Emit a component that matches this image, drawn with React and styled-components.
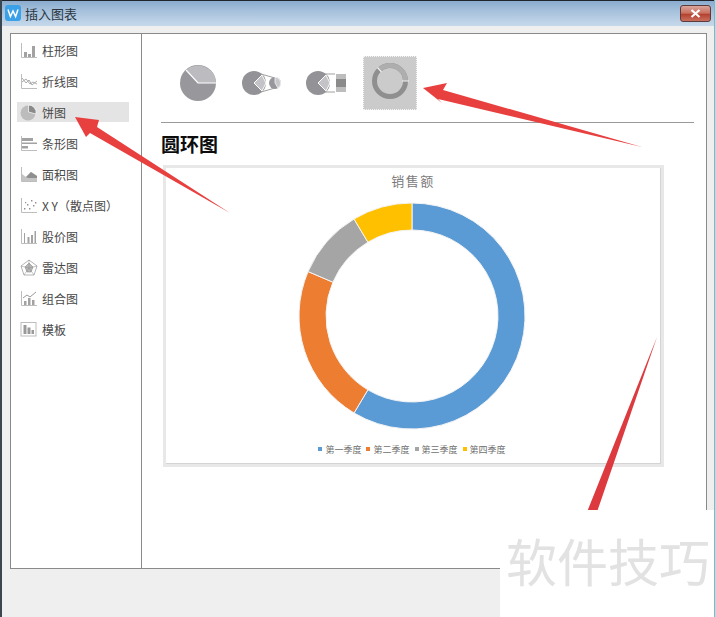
import styled, { createGlobalStyle } from 'styled-components'

const GlobalStyle = createGlobalStyle`
  html, body {
    margin: 0;
    padding: 0;
    background: #fff;
  }
  * {
    box-sizing: border-box;
  }
`

const Page = styled.div`
  position: relative;
  width: 715px;
  height: 617px;
  overflow: hidden;
  display: flex;
  flex-direction: column;
  font-family: 'Noto Sans CJK SC', 'Liberation Sans', sans-serif;
  background: #efefef;
  border-left: 2px solid #3a4650;
  border-right: 1px solid #42d3e0;
`

const TitleBar = styled.div`
  height: 26px;
  flex: none;
  display: flex;
  align-items: center;
  padding: 0 3px 1px 3px;
  gap: 4px;
  border-top: 1px solid #20262c;
  background: linear-gradient(to bottom, #8aaccf 0%, #a9c3dd 45%, #c6d9eb 100%);
`

const TitleText = styled.span`
  font-size: 13px;
  color: #2b3640;
`

const CloseButton = styled.div`
  margin-left: auto;
  width: 31px;
  height: 17px;
  display: flex;
  align-items: center;
  justify-content: center;
  border: 1px solid #5e3a3a;
  border-radius: 3px;
  background: linear-gradient(to bottom, #d9a59c 0%, #c9705f 48%, #b5412f 55%, #c9705f 100%);
`

const Body = styled.div`
  flex: 1;
  padding: 7px 7px 0 8px;
`

const Panel = styled.div`
  height: 536px;
  display: flex;
  border: 1px solid #8a8a8a;
  background: #fff;
`

const Sidebar = styled.div`
  width: 131px;
  flex: none;
  padding: 6px 12px 0 6px;
  border-right: 1px solid #8a8a8a;
`

const SideItem = styled.div`
  height: 20px;
  margin-bottom: 11px;
  display: flex;
  align-items: center;
  gap: 4px;
  padding-left: 3px;
  font-size: 12px;
  color: #484848;
  white-space: pre;
  background: ${(props) => (props.$active ? '#e4e4e4' : 'transparent')};
`

const Main = styled.div`
  flex: 1;
  padding: 0 12px 0 19px;
`

const TypeRow = styled.div`
  height: 89px;
  padding: 22px 0 0 10px;
  display: flex;
  align-items: flex-start;
  gap: 10px;
  border-bottom: 1px solid #9a9a9a;
`

const TypeButton = styled.div`
  width: 54px;
  height: 54px;
  display: flex;
  align-items: center;
  justify-content: center;
  background: ${(props) => (props.$active ? '#cbcbcb' : 'transparent')};
  border: ${(props) => (props.$active ? '1px dotted #f4f4f4' : 'none')};
`

const Heading = styled.h2`
  margin: 10px 0 10px;
  font-size: 19px;
  line-height: 22px;
  font-weight: 700;
  color: #0c0c0c;
`

const ChartBox = styled.div`
  width: 501px;
  height: 302px;
  margin-left: 2px;
  display: flex;
  flex-direction: column;
  align-items: center;
  border: 3px solid #e8e8e8;
  box-shadow: inset -1px -1px 0 #d4d4d4;
  padding: 1px 3px 0 0;
`

const ChartTitle = styled.div`
  height: 24px;
  line-height: 24px;
  padding-left: 2px;
  font-size: 13px;
  letter-spacing: 1.5px;
  color: #7a7a7a;
`

const Donut = styled.svg`
  margin-top: 3px;
  flex: none;
`

const Legend = styled.div`
  margin-top: 5px;
  height: 16px;
  display: flex;
  align-items: center;
  gap: 5px;
  font-size: 9px;
  color: #707070;
`

const LegendItem = styled.span`
  display: flex;
  align-items: center;
  gap: 3px;
`

const Swatch = styled.i`
  width: 4px;
  height: 4px;
  background: ${(props) => props.$color};
`

const Arrows = styled.svg`
  position: absolute;
  left: -2px;
  top: 0;
  pointer-events: none;
`

const Watermark = styled.div`
  position: absolute;
  right: -1px;
  bottom: 0;
  width: 215px;
  height: 107px;
  padding: 15px 0 0 6px;
  background: #fff;
  font-size: 51px;
  line-height: 70px;
  font-weight: 400;
  color: #e2e2e2;
  white-space: nowrap;
`

const gray = '#a2a2a2'
const axis = (
  <path d="M1.5 1v14.5H17" fill="none" stroke="#bdbdbd" strokeWidth="1" />
)

const sideIcons = {
  bar: (
    <>
      {axis}
      <path d="M4 10h3v5H4zM8 12h3v3H8zM12 4h3v11h-3z" fill={gray} />
    </>
  ),
  line: (
    <>
      {axis}
      <path d="M2 5l4 5 3-3 3 5 5-4M2 9l4-3 4 5 3-2 4 2" fill="none" stroke={gray} strokeWidth="0.9" />
    </>
  ),
  pie: (
    <>
      <circle cx="8" cy="9" r="7.500" fill="#bcbcbc" />
      <path d="M8.500 1a7.500 7.500 0 0 1 7.500 9L8.500 8z" fill="#8a8a8a" stroke="#fff" strokeWidth="0.7" />
    </>
  ),
  hbar: (
    <>
      {axis}
      <path d="M2 3h11v3H2zM2 7.500h15V9H2zM2 11h6v2.500H2z" fill={gray} />
    </>
  ),
  area: (
    <>
      {axis}
      <path d="M2 15V8l4 3 5-5 6 4v5z" fill="#c4c4c4" />
      <path d="M6 11l5-5 6 4v2H8z" fill="#8f8f8f" />
    </>
  ),
  scatter: (
    <>
      {axis}
      <path d="M4 11h1.400v1.400H4zM7 7h1.400v1.400H7zM9 11h1.400v1.400H9zM11 3h1.400v1.400h-1.400zM13 8h1.400v1.400H13zM15 5h1.400v1.400H15zM5 5h1.200v1.200H5z" fill="#8f8f8f" />
    </>
  ),
  stock: (
    <>
      {axis}
      <path d="M4 5h1v10H4zM7.500 9h2v6h-2zM11 7h2v8h-2zM14.500 3H16v12h-1.500z" fill={gray} />
    </>
  ),
  radar: (
    <>
      <path d="M9 1l8 6-3 9H4L1 7z" fill="none" stroke="#b4b4b4" />
      <path d="M9 4l4 4-2 5H7L5 8z" fill="#b8b8b8" stroke="#8a8a8a" strokeWidth="0.6" />
      <path d="M9 1v8M1 7l8 2 8-2M4 16l5-7 5 7" fill="none" stroke="#8a8a8a" strokeWidth="0.5" />
    </>
  ),
  combo: (
    <>
      {axis}
      <path d="M4 11h2.500v4H4zM8 8h2.500v7H8zM12 10h2.500v5H12z" fill={gray} />
      <path d="M3 8l4-3 3 2 6-5" fill="none" stroke="#8f8f8f" strokeWidth="0.9" />
    </>
  ),
  template: (
    <>
      <rect x="1" y="1.500" width="15" height="13.500" fill="none" stroke="#bdbdbd" />
      <path d="M3.500 4h3v9h-3zM7.500 6.500h3V13h-3zM11.500 9H14v4h-2.500z" fill="#9a9a9a" />
    </>
  ),
}

const sideItems = [
  { icon: 'bar', label: '柱形图' },
  { icon: 'line', label: '折线图' },
  { icon: 'pie', label: '饼图', active: true },
  { icon: 'hbar', label: '条形图' },
  { icon: 'area', label: '面积图' },
  { icon: 'scatter', label: 'X Y（散点图）' },
  { icon: 'stock', label: '股价图' },
  { icon: 'radar', label: '雷达图' },
  { icon: 'combo', label: '组合图' },
  { icon: 'template', label: '模板' },
]

const slices = [
  { label: '第一季度', value: 8.2, color: '#5b9bd5' },
  { label: '第二季度', value: 3.2, color: '#ed7d31' },
  { label: '第三季度', value: 1.4, color: '#a5a5a5' },
  { label: '第四季度', value: 1.2, color: '#ffc000' },
]

function point(r, turn) {
  const a = turn * Math.PI * 2
  return `${(120 + r * Math.sin(a)).toFixed(2)} ${(120 - r * Math.cos(a)).toFixed(2)}`
}

function ringPath(start, end) {
  const large = end - start > 0.5 ? 1 : 0
  return [
    `M${point(113, start)}`,
    `A113 113 0 ${large} 1 ${point(113, end)}`,
    `L${point(86, end)}`,
    `A86 86 0 ${large} 0 ${point(86, start)}`,
    'Z',
  ].join(' ')
}

function DonutChart() {
  const total = slices.reduce((sum, s) => sum + s.value, 0)
  let at = 0
  return (
    <Donut width="240" height="240" viewBox="0 0 240 240">
      {slices.map((s) => {
        const start = at
        at += s.value / total
        return <path key={s.label} d={ringPath(start, at)} fill={s.color} stroke="#f4f4f4" strokeWidth="1" />
      })}
    </Donut>
  )
}

function SideIcon({ name }) {
  return (
    <svg width="18" height="17" viewBox="0 0 18 17">
      {sideIcons[name]}
    </svg>
  )
}

function WpsLogo() {
  return (
    <svg width="16" height="16" viewBox="0 0 16 16">
      <rect width="16" height="16" rx="3" fill="#3aa0e8" />
      <path d="M3 4.500l2.400 7L8 6l2.600 5.500 2.400-7" fill="none" stroke="#fff" strokeWidth="1.500" />
    </svg>
  )
}

function CloseIcon() {
  return (
    <svg width="11" height="9" viewBox="0 0 11 9">
      <path d="M1.500 1l8 7M9.500 1l-8 7" stroke="#fff" strokeWidth="2.200" />
    </svg>
  )
}

function PieType() {
  return (
    <svg width="38" height="38" viewBox="0 0 38 38">
      <circle cx="19" cy="19" r="18" fill="#98989c" />
      <path d="M19 19L7 6A18 18 0 0 1 37 19z" fill="#bcbcc0" />
      <path d="M7 6l12 13h18" fill="none" stroke="#fff" strokeWidth="1.200" />
    </svg>
  )
}

function PieOfPieType() {
  return (
    <svg width="42" height="26" viewBox="0 0 42 26">
      <circle cx="13" cy="13" r="12" fill="#939397" />
      <path d="M13 13l8-8 4 8-4 8z" fill="#c4c4c8" stroke="#fff" />
      <path d="M20 4l14 4M20 22l14-4" stroke="#a0a0a0" />
      <circle cx="34" cy="13" r="6" fill="#98989c" />
      <path d="M34 13V7a6 6 0 0 1 3 11z" fill="#c8c8cc" stroke="#fff" strokeWidth="0.7" />
    </svg>
  )
}

function BarOfPieType() {
  return (
    <svg width="42" height="26" viewBox="0 0 42 26">
      <circle cx="13" cy="13" r="12" fill="#939397" />
      <path d="M13 13l8-8 4 8-4 8z" fill="#c4c4c8" stroke="#fff" />
      <path d="M20 4h10M20 22h10" stroke="#a0a0a0" />
      <rect x="31" y="4" width="10" height="5" fill="#bdbdbd" />
      <rect x="31" y="9" width="10" height="8" fill="#8a8a8a" />
      <rect x="31" y="17" width="10" height="5" fill="#bdbdbd" />
    </svg>
  )
}

function DoughnutType() {
  return (
    <svg width="38" height="42" viewBox="0 0 38 42">
      <circle cx="19" cy="19" r="15.500" fill="none" stroke="#8f8f8f" strokeWidth="5" />
      <path d="M9 7.200A15.500 15.500 0 0 1 34.500 19" fill="none" stroke="#aeaeae" strokeWidth="5" />
      <path d="M31 19h7M6.500 5.500l4 4.500" stroke="#f2f2f2" strokeWidth="1.200" />
    </svg>
  )
}

function RedArrows() {
  return (
    <Arrows width="715" height="617" viewBox="0 0 715 617">
      <path d="M75 117L99 120 97 127 230 213 90 133 86 137z" fill="#e8403f" />
      <path d="M423 88L447 83 443 90 642 147 438 99 442 103z" fill="#e8403f" />
      <path d="M657 337L597 512 587 512z" fill="#dc3a3e" />
    </Arrows>
  )
}

export default function App() {
  return (
    <Page>
      <GlobalStyle />
      <TitleBar>
        <WpsLogo />
        <TitleText>插入图表</TitleText>
        <CloseButton>
          <CloseIcon />
        </CloseButton>
      </TitleBar>
      <Body>
        <Panel>
          <Sidebar>
            {sideItems.map((item) => (
              <SideItem key={item.icon} $active={item.active}>
                <SideIcon name={item.icon} />
                {item.label}
              </SideItem>
            ))}
          </Sidebar>
          <Main>
            <TypeRow>
              <TypeButton><PieType /></TypeButton>
              <TypeButton><PieOfPieType /></TypeButton>
              <TypeButton><BarOfPieType /></TypeButton>
              <TypeButton $active><DoughnutType /></TypeButton>
            </TypeRow>
            <Heading>圆环图</Heading>
            <ChartBox>
              <ChartTitle>销售额</ChartTitle>
              <DonutChart />
              <Legend>
                {slices.map((s) => (
                  <LegendItem key={s.label}>
                    <Swatch $color={s.color} />
                    {s.label}
                  </LegendItem>
                ))}
              </Legend>
            </ChartBox>
          </Main>
        </Panel>
      </Body>
      <RedArrows />
      <Watermark>软件技巧</Watermark>
    </Page>
  )
}
